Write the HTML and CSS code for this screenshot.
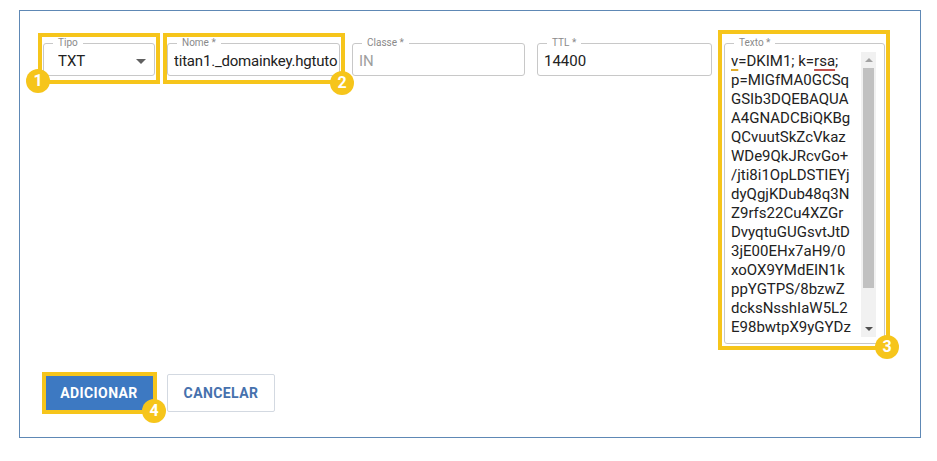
FILE: index.html
```html
<!DOCTYPE html>
<html lang="pt-BR">
<head>
<meta charset="utf-8">
<title>Adicionar registro DNS</title>
<link rel="stylesheet" href="styles.css">
</head>
<body>
<div class="panel">
  <div class="fields">
    <div class="field field-tipo">
      <span class="field-label">Tipo</span>
      <div class="field-value select-value">TXT</div>
      <span class="caret"></span>
      <span class="mark mark-1"></span>
      <span class="badge badge-1">1</span>
    </div>
    <div class="field field-nome">
      <span class="field-label">Nome *</span>
      <div class="field-value nome-value">titan1._domainkey.hgtuto</div>
      <span class="mark mark-2"></span>
      <span class="badge badge-2">2</span>
    </div>
    <div class="field field-classe">
      <span class="field-label">Classe *</span>
      <div class="field-value disabled">IN</div>
    </div>
    <div class="field field-ttl">
      <span class="field-label">TTL *</span>
      <div class="field-value">14400</div>
    </div>
    <div class="field field-texto">
      <span class="field-label">Texto *</span>
      <div class="textarea">
        <div class="textarea-text">
          <div class="line"><span class="spell-warn">v</span>=DKIM1; k=<span class="spell-err">rsa</span>;</div>
          <div class="line">p=MIGfMA0GCSq</div>
          <div class="line">GSIb3DQEBAQUA</div>
          <div class="line">A4GNADCBiQKBg</div>
          <div class="line">QCvuutSkZcVkaz</div>
          <div class="line">WDe9QkJRcvGo+</div>
          <div class="line">/jti8i1OpLDSTIEYj</div>
          <div class="line">dyQgjKDub48q3N</div>
          <div class="line">Z9rfs22Cu4XZGr</div>
          <div class="line">DvyqtuGUGsvtJtD</div>
          <div class="line">3jE00EHx7aH9/0</div>
          <div class="line">xoOX9YMdEIN1k</div>
          <div class="line">ppYGTPS/8bzwZ</div>
          <div class="line">dcksNsshIaW5L2</div>
          <div class="line">E98bwtpX9yGYDz</div>
        </div>
        <div class="scrollbar">
          <span class="sb-btn sb-up"></span>
          <div class="sb-track"><span class="sb-thumb"></span></div>
          <span class="sb-btn sb-down"></span>
        </div>
      </div>
      <span class="mark mark-3"></span>
      <span class="badge badge-3">3</span>
    </div>
  </div>
  <div class="actions">
    <button class="btn btn-primary">ADICIONAR
      <span class="mark mark-4"></span>
      <span class="badge badge-4">4</span>
    </button>
    <button class="btn btn-secondary">CANCELAR</button>
  </div>
</div>
</body>
</html>
```

FILE: styles.css
```css
* { box-sizing: border-box; }

html, body {
  margin: 0;
  padding: 0;
  background: #ffffff;
}

body {
  font-family: Roboto, "Liberation Sans", Arial, sans-serif;
  color: #222222;
}

.panel {
  margin: 10px 0 0 19px;
  width: 902px;
  height: 428px;
  border: 1px solid #5e88b5;
  padding: 32px 0 25px 23px;
}

.fields {
  display: flex;
  align-items: flex-start;
  gap: 12px;
}

.field {
  position: relative;
  height: 33px;
  border: 1px solid #c8c8c8;
  border-radius: 3px;
  padding: 8px 6px 0 6px;
}

.field-tipo { width: 112px; padding-left: 14px; }
.field-nome { width: 173px; padding-right: 0; }
.field-classe { width: 173px; }
.field-ttl { width: 175px; }
.field-texto { width: 161px; height: 301px; padding: 8px 8px 0 6px; }

.field-label {
  position: absolute;
  top: -7px;
  left: 9px;
  padding: 0 5px;
  background: #ffffff;
  font-size: 10px;
  line-height: 12px;
  color: #8a8a8a;
  white-space: nowrap;
}

.field-value {
  font-size: 15px;
  line-height: 19px;
  color: #222222;
  white-space: nowrap;
  overflow: hidden;
}

.nome-value { letter-spacing: -0.2px; }

.field-value.disabled { color: #9e9e9e; }

.caret {
  position: absolute;
  right: 8px;
  top: 15px;
  width: 0;
  height: 0;
  border-left: 5px solid transparent;
  border-right: 5px solid transparent;
  border-top: 5px solid #606060;
}

.textarea {
  display: flex;
  height: 285px;
}

.textarea-text {
  flex: 1;
  overflow: hidden;
  font-size: 15px;
  line-height: 19px;
  color: #222222;
}

.line { white-space: nowrap; }

.spell-warn {
  text-decoration: underline;
  text-decoration-color: #e2ad2a;
  text-decoration-thickness: 2px;
  text-underline-offset: 3px;
}

.spell-err {
  text-decoration: underline;
  text-decoration-color: #c0504d;
  text-decoration-thickness: 2px;
  text-underline-offset: 3px;
}

.scrollbar {
  width: 15px;
  flex: none;
  background: #f1f1f1;
  display: flex;
  flex-direction: column;
}

.sb-btn {
  height: 16px;
  flex: none;
  display: flex;
  align-items: center;
  justify-content: center;
}

.sb-up::before {
  content: "";
  border-left: 4px solid transparent;
  border-right: 4px solid transparent;
  border-bottom: 4px solid #a3a3a3;
}

.sb-down::before {
  content: "";
  border-left: 4px solid transparent;
  border-right: 4px solid transparent;
  border-top: 4px solid #505050;
}

.sb-track {
  flex: 1;
  padding: 0 2px;
}

.sb-thumb {
  display: block;
  height: 220px;
  background: #c1c1c1;
}

.actions {
  display: flex;
  gap: 12px;
  margin-top: 30px;
}

.btn {
  position: relative;
  height: 38px;
  border-radius: 2px;
  font-family: Roboto, "Liberation Sans", Arial, sans-serif;
  font-weight: 700;
  font-size: 14px;
  letter-spacing: 0.4px;
  padding: 0;
  cursor: pointer;
}

.btn-primary {
  width: 112px;
  background: #3d79c2;
  color: #ffffff;
  border: none;
}

.btn-secondary {
  width: 108px;
  background: #ffffff;
  color: #4671ad;
  border: 1px solid #d3d9e1;
}

/* annotation overlays */
.mark {
  position: absolute;
  border: 4px solid #f6c51b;
  pointer-events: none;
}

.mark-1 { top: -11px; right: -6px; bottom: -9px; left: -6px; }
.mark-2 { top: -11px; right: -6px; bottom: -9px; left: -5px; }
.mark-3 { top: -14px; right: -6px; bottom: -7px; left: -7px; }
.mark-4 { top: -2px; right: -2px; bottom: -2px; left: -1px; }

.badge {
  position: absolute;
  width: 24px;
  height: 24px;
  border-radius: 50%;
  background: #f6c51b;
  color: #ffffff;
  font-family: Roboto, "Liberation Sans", Arial, sans-serif;
  font-weight: 700;
  font-size: 16px;
  line-height: 24px;
  text-align: center;
  letter-spacing: 0;
}

.badge-1 { left: -18px; top: 25px; }
.badge-2 { right: -15px; top: 27px; }
.badge-3 { right: -15px; bottom: -16px; }
.badge-4 { right: -11px; bottom: -11px; }
```
